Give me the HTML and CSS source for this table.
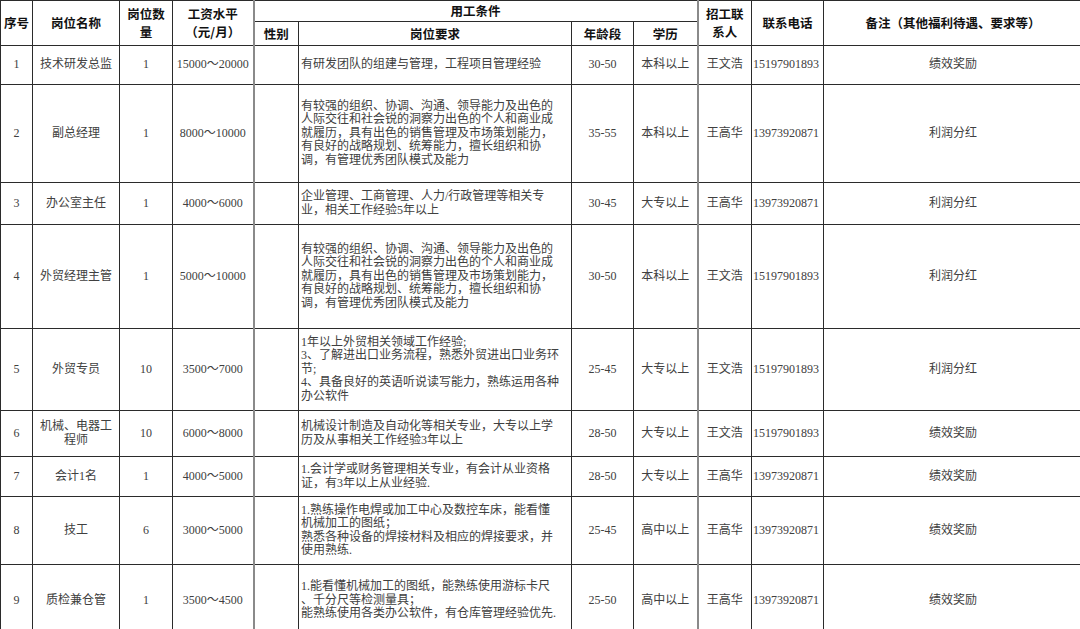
FILE: index.html
```html
<!DOCTYPE html>
<html lang="zh-CN">
<head>
<meta charset="utf-8">
<title>招聘岗位表</title>
<link rel="stylesheet" href="styles.css">
</head>
<body>
<table class="jobs">
  <colgroup>
    <col class="c-no"><col class="c-name"><col class="c-count"><col class="c-pay">
    <col class="c-sex"><col class="c-req"><col class="c-age"><col class="c-edu">
    <col class="c-contact"><col class="c-phone"><col class="c-note">
  </colgroup>
  <thead>
    <tr class="h1">
      <th rowspan="2">序号</th>
      <th rowspan="2">岗位名称</th>
      <th rowspan="2"><span class="ln">岗位数</span><span class="ln">量</span></th>
      <th rowspan="2"><span class="ln">工资水平</span><span class="ln">（元/月）</span></th>
      <th colspan="4" class="grp">用工条件</th>
      <th rowspan="2" class="contact-h"><span class="ln">招工联</span><span class="ln">系人</span></th>
      <th rowspan="2">联系电话</th>
      <th rowspan="2">备注（其他福利待遇、要求等）</th>
    </tr>
    <tr class="h2">
      <th class="sex">性别</th>
      <th>岗位要求</th>
      <th>年龄段</th>
      <th>学历</th>
    </tr>
  </thead>
  <tbody>
    <tr class="r1">
      <td>1</td><td>技术研发总监</td><td>1</td><td>15000～20000</td><td class="sex"></td>
      <td class="req">有研发团队的组建与管理，工程项目管理经验</td>
      <td>30-50</td><td>本科以上</td><td class="contact">王文浩</td><td class="phone">15197901893</td><td>绩效奖励</td>
    </tr>
    <tr class="r2">
      <td>2</td><td>副总经理</td><td>1</td><td>8000～10000</td><td class="sex"></td>
      <td class="req">有较强的组织、协调、沟通、领导能力及出色的<br>人际交往和社会锐的洞察力出色的个人和商业成<br>就履历，具有出色的销售管理及市场策划能力，<br>有良好的战略规划、统筹能力，擅长组织和协<br>调，有管理优秀团队模式及能力</td>
      <td>35-55</td><td>本科以上</td><td class="contact">王高华</td><td class="phone">13973920871</td><td>利润分红</td>
    </tr>
    <tr class="r3">
      <td>3</td><td>办公室主任</td><td>1</td><td>4000～6000</td><td class="sex"></td>
      <td class="req">企业管理、工商管理、人力/行政管理等相关专<br>业，相关工作经验5年以上</td>
      <td>30-45</td><td>大专以上</td><td class="contact">王高华</td><td class="phone">13973920871</td><td>利润分红</td>
    </tr>
    <tr class="r4">
      <td>4</td><td>外贸经理主管</td><td>1</td><td>5000～10000</td><td class="sex"></td>
      <td class="req">有较强的组织、协调、沟通、领导能力及出色的<br>人际交往和社会锐的洞察力出色的个人和商业成<br>就履历，具有出色的销售管理及市场策划能力，<br>有良好的战略规划、统筹能力，擅长组织和协<br>调，有管理优秀团队模式及能力</td>
      <td>30-50</td><td>本科以上</td><td class="contact">王文浩</td><td class="phone">15197901893</td><td>利润分红</td>
    </tr>
    <tr class="r5">
      <td>5</td><td>外贸专员</td><td>10</td><td>3500～7000</td><td class="sex"></td>
      <td class="req">1年以上外贸相关领域工作经验;<br>3、了解进出口业务流程，熟悉外贸进出口业务环<br>节;<br>4、具备良好的英语听说读写能力，熟练运用各种<br>办公软件</td>
      <td>25-45</td><td>大专以上</td><td class="contact">王文浩</td><td class="phone">15197901893</td><td>利润分红</td>
    </tr>
    <tr class="r6">
      <td>6</td><td>机械、电器工<br>程师</td><td>10</td><td>6000～8000</td><td class="sex"></td>
      <td class="req">机械设计制造及自动化等相关专业，大专以上学<br>历及从事相关工作经验3年以上</td>
      <td>28-50</td><td>大专以上</td><td class="contact">王文浩</td><td class="phone">15197901893</td><td>绩效奖励</td>
    </tr>
    <tr class="r7">
      <td>7</td><td>会计1名</td><td>1</td><td>4000～5000</td><td class="sex"></td>
      <td class="req">1.会计学或财务管理相关专业，有会计从业资格<br>证，有3年以上从业经验.</td>
      <td>28-50</td><td>大专以上</td><td class="contact">王高华</td><td class="phone">13973920871</td><td>绩效奖励</td>
    </tr>
    <tr class="r8">
      <td>8</td><td>技工</td><td>6</td><td>3000～5000</td><td class="sex"></td>
      <td class="req">1.熟练操作电焊或加工中心及数控车床，能看懂<br>机械加工的图纸；<br>熟悉各种设备的焊接材料及相应的焊接要求，并<br>使用熟练.</td>
      <td>25-45</td><td>高中以上</td><td class="contact">王高华</td><td class="phone">13973920871</td><td>绩效奖励</td>
    </tr>
    <tr class="r9">
      <td>9</td><td>质检兼仓管</td><td>1</td><td>3500～4500</td><td class="sex"></td>
      <td class="req">1.能看懂机械加工的图纸，能熟练使用游标卡尺<br>、千分尺等检测量具；<br>能熟练使用各类办公软件，有仓库管理经验优先.</td>
      <td>25-50</td><td>高中以上</td><td class="contact">王高华</td><td class="phone">13973920871</td><td>绩效奖励</td>
    </tr>
  </tbody>
</table>
</body>
</html>
```
FILE: styles.css
```css
html, body {
  margin: 0;
  padding: 0;
  background: #ffffff;
}

body {
  font-family: "Liberation Serif", "Noto Sans CJK SC", sans-serif;
  font-size: 12px;
  color: #404040;
  overflow: hidden;
}

.jobs {
  border-collapse: collapse;
  table-layout: fixed;
  width: 1082px;
}

.c-no { width: 32px; }
.c-name { width: 87px; }
.c-count { width: 53px; }
.c-pay { width: 81px; }
.c-sex { width: 45px; }
.c-req { width: 273px; }
.c-age { width: 62px; }
.c-edu { width: 64px; }
.c-contact { width: 54px; }
.c-phone { width: 72px; }
.c-note { width: 259px; }

.jobs th,
.jobs td {
  border: 1px solid #2b2b2b;
  padding: 0 1px;
  text-align: center;
  vertical-align: middle;
  overflow: hidden;
  white-space: nowrap;
}

.jobs th {
  font-family: "Noto Sans CJK SC", sans-serif;
  font-weight: 700;
  font-size: 12.5px;
  line-height: 16px;
  color: #111111;
}

.jobs th .ln {
  display: block;
  height: 18px;
  line-height: 18px;
}

.jobs td {
  line-height: 13.4px;
}

.jobs .sex,
.jobs .contact,
.jobs .contact-h,
.jobs .grp {
  border-left: 2px solid #8a8a8a;
}

.jobs td.req {
  text-align: left;
  padding-left: 2px;
}

.jobs td.phone {
  padding: 0 0 0 1px;
  text-align: left;
}

.h1 { height: 21px; }
.h2 { height: 24px; }
.r1 { height: 39px; }
.r2 { height: 98px; }
.r3 { height: 42px; }
.r4 { height: 104px; }
.r5 { height: 82px; }
.r6 { height: 46px; }
.r7 { height: 40px; }
.r8 { height: 68px; }
.r9 { height: 72px; }
```
